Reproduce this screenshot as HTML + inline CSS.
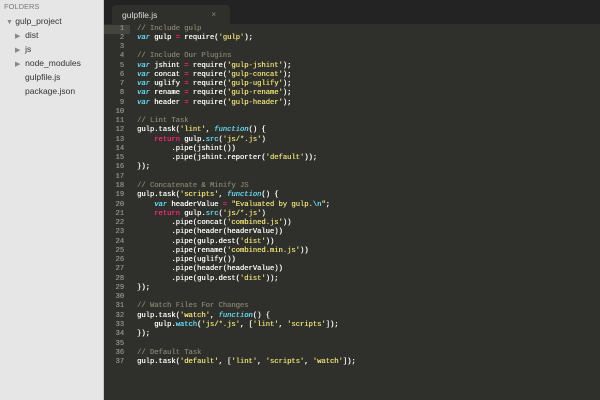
<!DOCTYPE html>
<html><head><style>
*{margin:0;padding:0;box-sizing:border-box}
body{width:600px;height:400px;overflow:hidden;background:#2f2f2c;font-family:"Liberation Sans",sans-serif;position:relative}
#side{position:absolute;left:0;top:0;width:104px;height:400px;background:#e6e6e6;border-right:1px solid #c8c8c8}
#side div{position:absolute;font-size:8.5px;color:#333;white-space:nowrap}
.tri{color:#888;font-size:7px}
#tabs{position:absolute;left:104px;top:0;right:0;height:24px;background:#232323}
#tab{position:absolute;left:8px;top:5px;width:118px;height:19px;background:#2f2f2c;border-radius:4px 4px 0 0;color:#ddd;font-size:8.5px;padding:5px 0 0 10px}
#tab span{position:absolute;right:14px;top:5px;color:#888;font-size:8px}
#code{position:absolute;left:104px;top:24.5px;font-family:"Liberation Mono",monospace;font-size:7.15px;line-height:9.28px;color:#f8f8f2;text-shadow:0.3px 0 0 currentColor}
.l{display:flex;height:9.28px;white-space:pre}
.n{width:20px;text-align:right;color:#8f908a;margin-right:13px}
.hl{background:#45453f}
.c{color:#807d6a}.k{color:#66d9ef;font-style:italic}.s{color:#e6db74}.p{color:#f92672}.b{color:#66d9ef}
</style></head><body>
<div id="side">
<div style="left:4px;top:2px;color:#7a7a7a;font-size:7.5px">FOLDERS</div>
<div style="left:6px;top:15.5px"><span class="tri">▼</span> gulp_project</div>
<div style="left:15px;top:29.5px"><span class="tri">▶</span>&nbsp; dist</div>
<div style="left:15px;top:43.5px"><span class="tri">▶</span>&nbsp; js</div>
<div style="left:15px;top:57.5px"><span class="tri">▶</span>&nbsp; node_modules</div>
<div style="left:25px;top:72px">gulpfile.js</div>
<div style="left:25px;top:86px">package.json</div>
</div>
<div id="tabs"><div id="tab">gulpfile.js<span>×</span></div></div>
<div id="code"><div class="l"><span class="n hl" style="width:26px;margin-right:7px;padding-right:6px">1</span><span class="c">// Include gulp</span></div><div class="l"><span class="n">2</span><span><span class="k">var</span> gulp <span class="p">=</span> require(<span class="s">'gulp'</span>);</span></div><div class="l"><span class="n">3</span></div><div class="l"><span class="n">4</span><span class="c">// Include Our Plugins</span></div><div class="l"><span class="n">5</span><span><span class="k">var</span> jshint <span class="p">=</span> require(<span class="s">'gulp-jshint'</span>);</span></div><div class="l"><span class="n">6</span><span><span class="k">var</span> concat <span class="p">=</span> require(<span class="s">'gulp-concat'</span>);</span></div><div class="l"><span class="n">7</span><span><span class="k">var</span> uglify <span class="p">=</span> require(<span class="s">'gulp-uglify'</span>);</span></div><div class="l"><span class="n">8</span><span><span class="k">var</span> rename <span class="p">=</span> require(<span class="s">'gulp-rename'</span>);</span></div><div class="l"><span class="n">9</span><span><span class="k">var</span> header <span class="p">=</span> require(<span class="s">'gulp-header'</span>);</span></div><div class="l"><span class="n">10</span></div><div class="l"><span class="n">11</span><span class="c">// Lint Task</span></div><div class="l"><span class="n">12</span><span>gulp.task(<span class="s">'lint'</span>, <span class="k">function</span>() {</span></div><div class="l"><span class="n">13</span><span>    <span class="p">return</span> gulp.<span class="b">src</span>(<span class="s">'js/*.js'</span>)</span></div><div class="l"><span class="n">14</span><span>        .pipe(jshint())</span></div><div class="l"><span class="n">15</span><span>        .pipe(jshint.reporter(<span class="s">'default'</span>));</span></div><div class="l"><span class="n">16</span><span>});</span></div><div class="l"><span class="n">17</span></div><div class="l"><span class="n">18</span><span class="c">// Concatenate &amp; Minify JS</span></div><div class="l"><span class="n">19</span><span>gulp.task(<span class="s">'scripts'</span>, <span class="k">function</span>() {</span></div><div class="l"><span class="n">20</span><span>    <span class="k">var</span> headerValue <span class="p">=</span> <span class="s">"Evaluated by gulp.<span class="b">\n</span>"</span>;</span></div><div class="l"><span class="n">21</span><span>    <span class="p">return</span> gulp.<span class="b">src</span>(<span class="s">'js/*.js'</span>)</span></div><div class="l"><span class="n">22</span><span>        .pipe(concat(<span class="s">'combined.js'</span>))</span></div><div class="l"><span class="n">23</span><span>        .pipe(header(headerValue))</span></div><div class="l"><span class="n">24</span><span>        .pipe(gulp.dest(<span class="s">'dist'</span>))</span></div><div class="l"><span class="n">25</span><span>        .pipe(rename(<span class="s">'combined.min.js'</span>))</span></div><div class="l"><span class="n">26</span><span>        .pipe(uglify())</span></div><div class="l"><span class="n">27</span><span>        .pipe(header(headerValue))</span></div><div class="l"><span class="n">28</span><span>        .pipe(gulp.dest(<span class="s">'dist'</span>));</span></div><div class="l"><span class="n">29</span><span>});</span></div><div class="l"><span class="n">30</span></div><div class="l"><span class="n">31</span><span class="c">// Watch Files For Changes</span></div><div class="l"><span class="n">32</span><span>gulp.task(<span class="s">'watch'</span>, <span class="k">function</span>() {</span></div><div class="l"><span class="n">33</span><span>    gulp.<span class="b">watch</span>(<span class="s">'js/*.js'</span>, [<span class="s">'lint'</span>, <span class="s">'scripts'</span>]);</span></div><div class="l"><span class="n">34</span><span>});</span></div><div class="l"><span class="n">35</span></div><div class="l"><span class="n">36</span><span class="c">// Default Task</span></div><div class="l"><span class="n">37</span><span>gulp.task(<span class="s">'default'</span>, [<span class="s">'lint'</span>, <span class="s">'scripts'</span>, <span class="s">'watch'</span>]);</span></div></div>
</body></html>
